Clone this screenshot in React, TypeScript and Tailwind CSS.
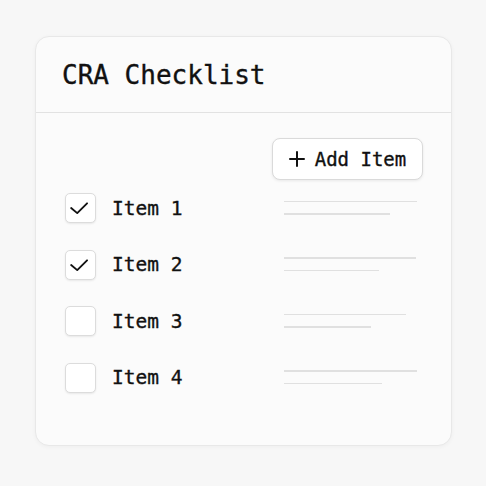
import React from "react";

interface ChecklistItem {
  label: string;
  done: boolean;
  lines: [number, number];
}

const items: ChecklistItem[] = [
  { label: "Item 1", done: true, lines: [133, 106] },
  { label: "Item 2", done: true, lines: [132, 95] },
  { label: "Item 3", done: false, lines: [122, 87] },
  { label: "Item 4", done: false, lines: [133, 98] },
];

const Checkbox: React.FC<{ checked: boolean }> = ({ checked }) => (
  <div className="w-[31px] h-[30px] shrink-0 rounded-[5px] border border-[#dcdcdc] bg-white shadow-[0_1px_2px_rgba(0,0,0,0.08)] flex items-center justify-center">
    {checked && (
      <svg width="31" height="30" viewBox="0 0 31 30" fill="none">
        <path d="M5.5 15 L12 20.5 L22.5 10" stroke="#111" strokeWidth="2" strokeLinecap="round" strokeLinejoin="round" />
      </svg>
    )}
  </div>
);

const App: React.FC = () => {
  return (
    <div className="w-[486px] h-[486px] bg-[#f7f7f7] pt-[36px] pl-[35px] font-['DejaVu_Sans_Mono',monospace] text-[#111] [-webkit-text-stroke:0.35px_#111]">
      <div className="w-[417px] h-[410px] rounded-[14px] border border-[#e8e8e8] bg-[#fbfbfb] shadow-[0_1px_4px_rgba(0,0,0,0.04)] flex flex-col">
        <div className="h-[76px] shrink-0 border-b border-[#e2e2e2] flex items-center pl-[26px]">
          <h1 className="text-[26px] leading-none">CRA Checklist</h1>
        </div>
        <div className="px-[28px] pt-[25px]">
          <div className="flex justify-end">
            <button className="h-[42px] w-[151px] rounded-[8px] border border-[#dadada] bg-white shadow-[0_1px_3px_rgba(0,0,0,0.08)] flex items-center justify-center gap-[10px] text-[19px]">
              <svg width="16" height="16" viewBox="0 0 16 16" fill="none">
                <path d="M8 1 V15 M1 8 H15" stroke="#111" strokeWidth="2" strokeLinecap="round" />
              </svg>
              <span>Add Item</span>
            </button>
          </div>
          <ul className="pl-[1px]">
            {items.map((item) => (
              <li key={item.label} className="h-[56.5px] flex items-center">
                <Checkbox checked={item.done} />
                <span className="ml-[16px] text-[19.5px] leading-none">{item.label}</span>
                <div className="ml-auto w-[139px] flex flex-col gap-[11px] -mt-[1px]">
                  <div className="h-[1.5px] bg-[#e0e0e0]" style={{ width: item.lines[0] }} />
                  <div className="h-[1.5px] bg-[#e0e0e0]" style={{ width: item.lines[1] }} />
                </div>
              </li>
            ))}
          </ul>
        </div>
      </div>
    </div>
  );
};

export default App;
